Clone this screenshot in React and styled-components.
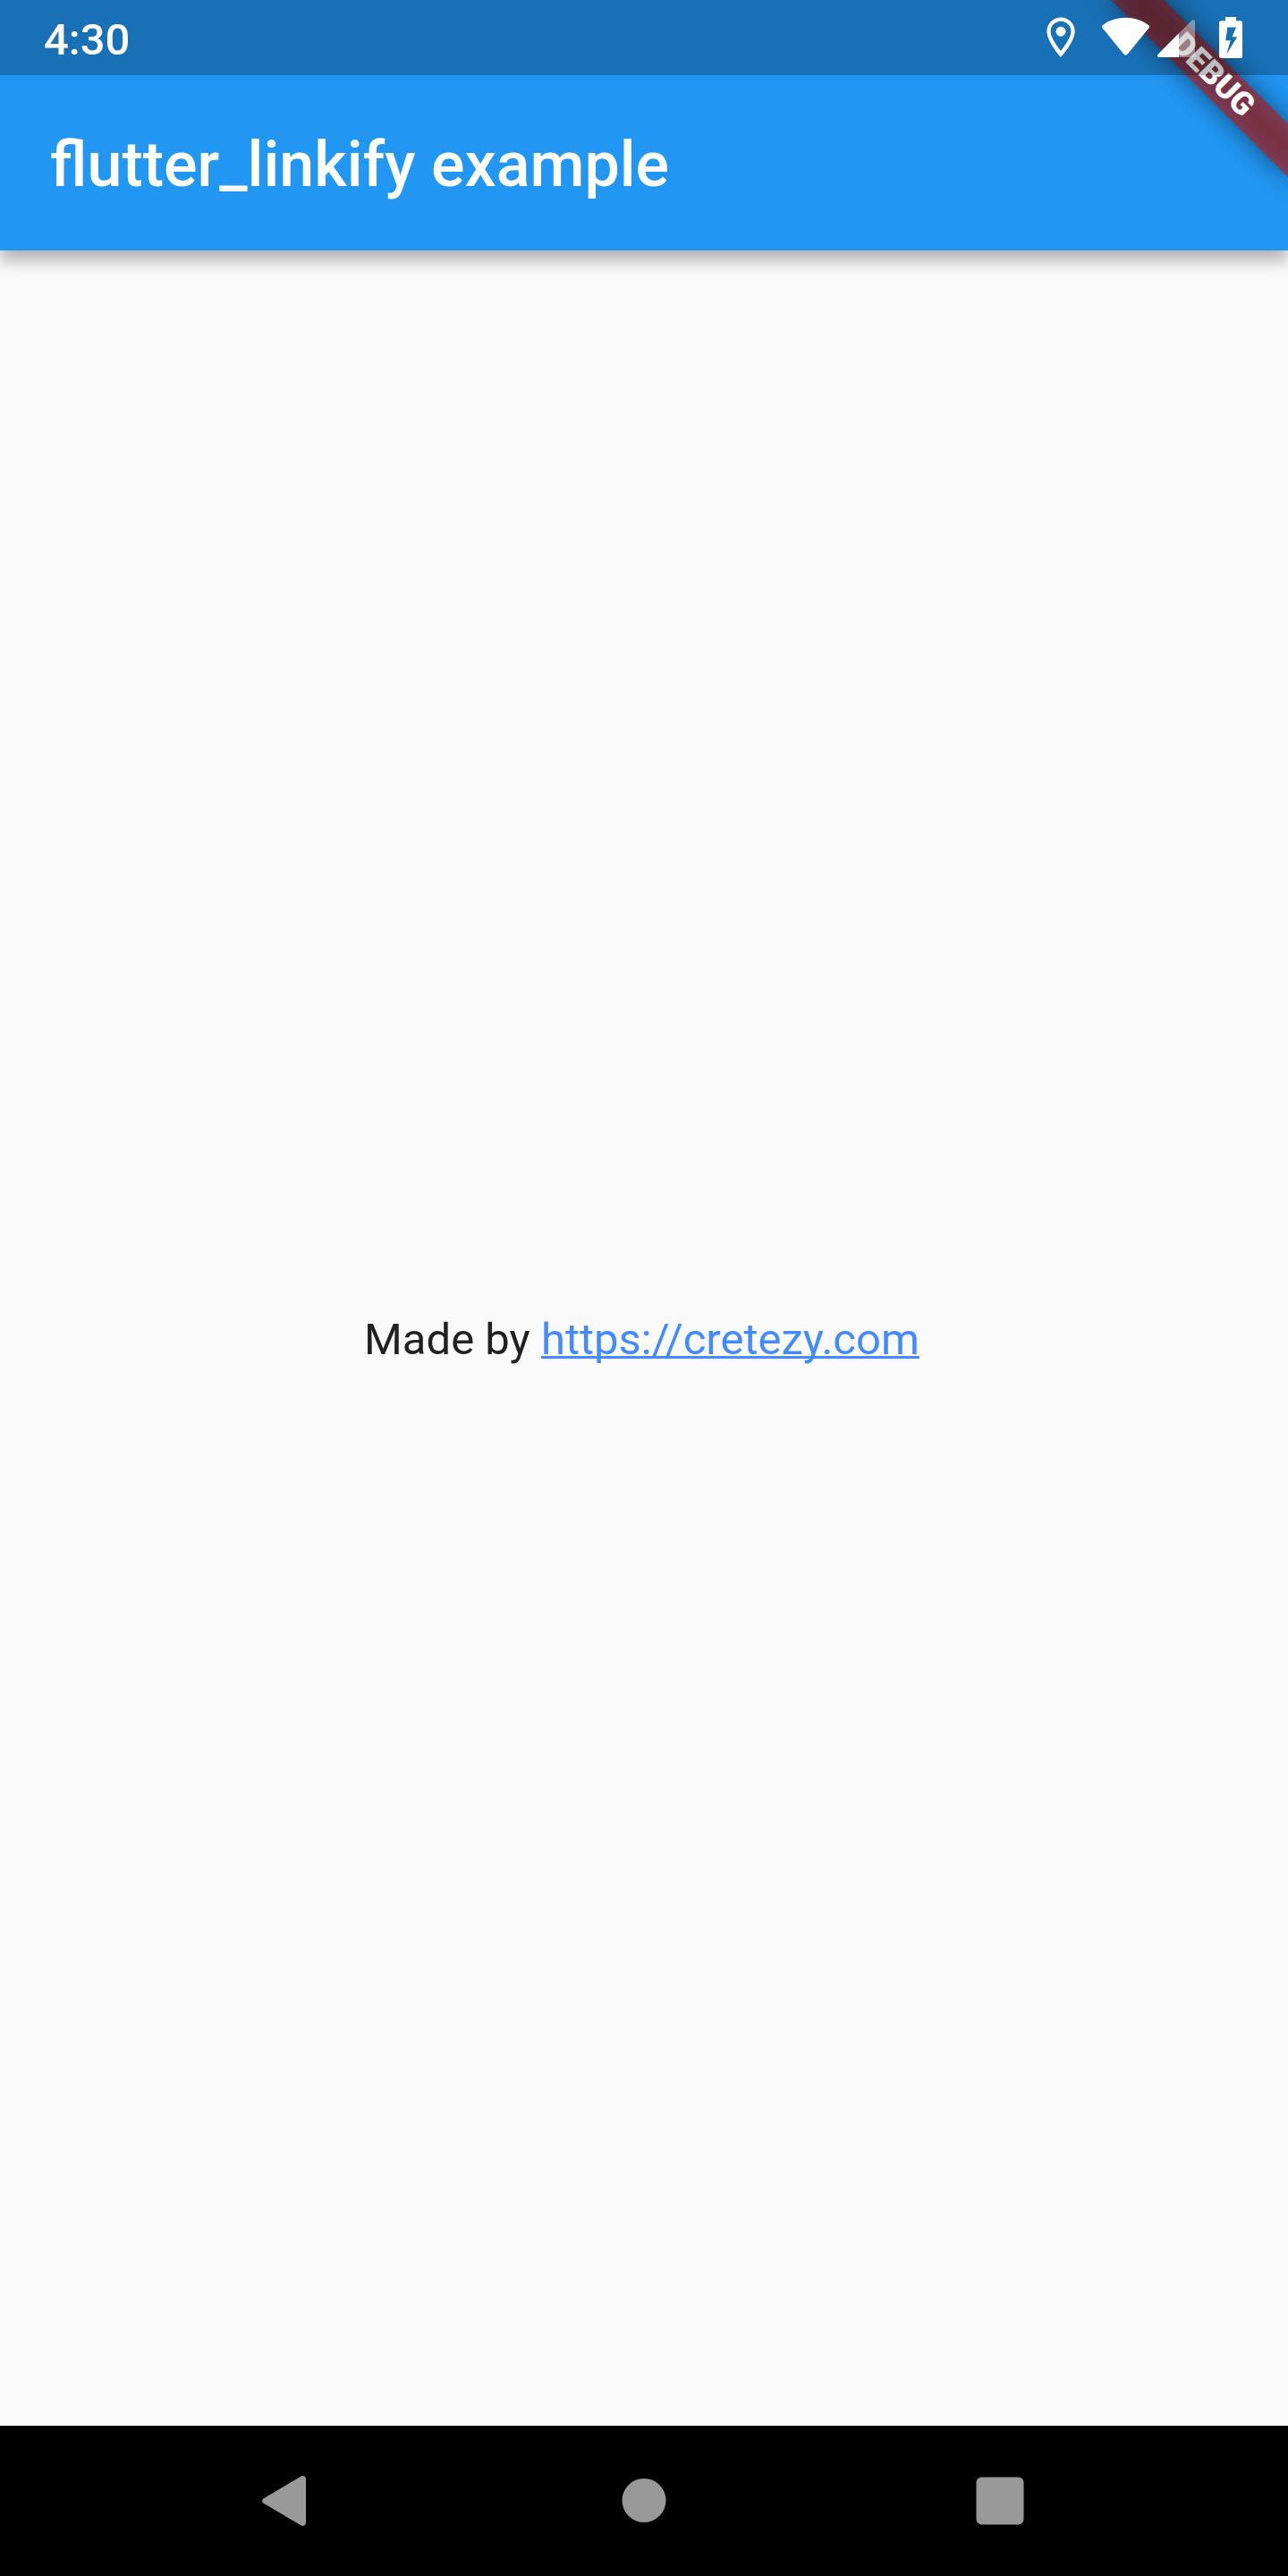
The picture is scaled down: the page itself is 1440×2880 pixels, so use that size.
import React from "react";
import styled, { createGlobalStyle } from "styled-components";

const GlobalStyle = createGlobalStyle`
  * { box-sizing: border-box; }
  body { margin: 0; background: #fafafa; }
`;

const Screen = styled.div`
  position: relative;
  display: flex;
  flex-direction: column;
  width: 1440px;
  height: 2880px;
  overflow: hidden;
  background: #fafafa;
  font-family: Roboto, "Noto Sans", sans-serif;
`;

const AppBar = styled.header`
  position: relative;
  z-index: 1;
  display: flex;
  align-items: center;
  height: 280px;
  padding: 88px 56px 0;
  background: #2196f3;
  box-shadow: 0 12px 16px rgba(0, 0, 0, 0.26), 0 7px 28px rgba(0, 0, 0, 0.04);
`;

const Title = styled.h1`
  margin: 0;
  color: #fff;
  font-size: 70px;
  font-weight: 500;
  line-height: 82px;
  white-space: nowrap;
`;

const Body = styled.main`
  display: flex;
  flex: 1;
  align-items: center;
  justify-content: center;
  padding: 2px 5px 0 0;
`;

const Message = styled.p`
  margin: 0;
  color: #212121;
  font-size: 49px;
  line-height: 57px;
  white-space: nowrap;
`;

const Link = styled.a`
  color: #448aff;
  text-decoration: underline;
  text-decoration-skip-ink: none;
  text-decoration-thickness: 2.5px;
  text-underline-offset: 1.5px;
`;

const NavigationBar = styled.nav`
  display: flex;
  align-items: center;
  justify-content: space-between;
  height: 168px;
  padding: 0 295px 0 292px;
  background: #000;
`;

const NavIcon = styled.svg`
  display: block;
  width: ${(p) => p.$size}px;
  height: 58px;
  fill: #999;
`;

const DebugBanner = styled.div`
  position: absolute;
  z-index: 2;
  top: 98px;
  left: 1300px;
  display: flex;
  align-items: center;
  justify-content: center;
  width: 280px;
  height: 42px;
  transform: rotate(45deg);
  transform-origin: 140px -98px;

  &::before,
  &::after {
    content: "";
    position: absolute;
    inset: 0;
  }
  &::before {
    background: rgba(0, 0, 0, 0.5);
    filter: blur(13.9px);
  }
  &::after {
    background: rgba(183, 28, 28, 0.627);
  }
`;

const BannerLabel = styled.span`
  position: relative;
  z-index: 1;
  color: #fff;
  font-size: 35.7px;
  font-weight: 900;
  line-height: 1;
`;

const StatusBar = styled.div`
  position: absolute;
  z-index: 3;
  top: 0;
  left: 0;
  display: flex;
  align-items: center;
  justify-content: space-between;
  width: 100%;
  height: 84px;
  padding: 0 49px;
  background: rgba(0, 0, 0, 0.25);
`;

const Clock = styled.span`
  padding-top: 5px;
  color: #fff;
  font-size: 49px;
  font-weight: 500;
  line-height: 57px;
`;

const StatusIcons = styled.svg`
  display: block;
  width: 222px;
  height: 84px;
  fill: #fff;
`;

function SystemIcons() {
  return (
    <StatusIcons viewBox="1169 0 222 84">
      <path
        fillRule="evenodd"
        d="M1186 19.4C1177.3 19.4 1170.4 26.4 1170.4 35C1170.4 46.8 1186 64 1186 64S1201.7 46.8 1201.7 35C1201.7 26.4 1194.7 19.4 1186 19.4ZM1174.6 35.2C1174.6 28.8 1179.7 23.7 1186 23.7S1197.4 28.8 1197.4 35.2C1197.4 41.6 1190.7 50.8 1186 56.9C1181.3 50.8 1174.6 41.6 1174.6 35.2Z"
      />
      <circle cx="1186" cy="35.2" r="5.5" />
      <path d="M1232.8 28.2C1238.5 23.3 1247.7 19.7 1258.5 19.7S1278.5 23.3 1284.3 28.2Q1285.8 29.7 1284.6 31.2L1260.8 60.3Q1258.5 63.2 1256.2 60.3L1232.5 31.2Q1231.3 29.7 1232.8 28.2Z" />
      <path opacity=".4" d="M1318 37.3L1332.2 23Q1336 20.2 1336 24.7V61Q1336 64 1333 64H1318Z" />
      <path d="M1318 37.3V64H1296.5Q1292.7 63.5 1294.8 60.4Z" />
      <path
        fillRule="evenodd"
        d="M1370 19H1382V23.3H1386.500Q1389 23.3 1389 26V62.5Q1389 65 1386.500 65H1365.500Q1363 65 1363 62.5V26Q1363 23.3 1365.500 23.3H1370ZM1372.300 30.500L1370.300 45.300H1375.700L1371.300 60.500L1383.300 41.300H1377.500L1382 30.500Z"
      />
    </StatusIcons>
  );
}

export default function App() {
  return (
    <>
      <GlobalStyle />
      <Screen>
        <AppBar>
          <Title>flutter_linkify example</Title>
        </AppBar>
        <Body>
          <Message>
            Made by <Link>https://cretezy.com</Link>
          </Message>
        </Body>
        <NavigationBar>
          <NavIcon $size={51} viewBox="0 0 51 58">
            <path d="M2.8 26.2L43.8 1.9Q46 .5 48.5 1.5Q50 2.5 50 5V53Q50 55.5 48.5 56.5Q46 57.5 43.8 56.1L2.8 31.8Q-.8 29 2.8 26.2Z" />
          </NavIcon>
          <NavIcon $size={55} viewBox="0 0 55 58">
            <circle cx="30" cy="28.5" r="24.5" />
          </NavIcon>
          <NavIcon $size={54} viewBox="0 0 54 58">
            <rect x=".5" y="2.5" width="53" height="53" rx="6" />
          </NavIcon>
        </NavigationBar>
        <DebugBanner>
          <BannerLabel>DEBUG</BannerLabel>
        </DebugBanner>
        <StatusBar>
          <Clock>4:30</Clock>
          <SystemIcons />
        </StatusBar>
      </Screen>
    </>
  );
}
